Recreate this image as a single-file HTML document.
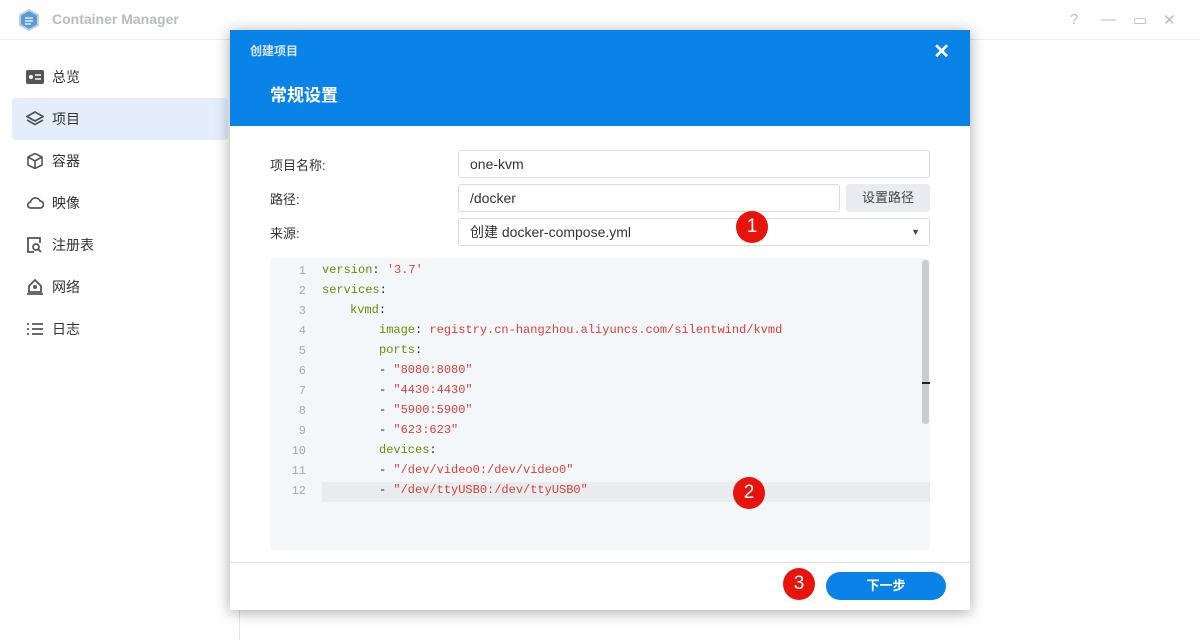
<!DOCTYPE html>
<html><head><meta charset="utf-8"><style>
*{box-sizing:border-box;margin:0;padding:0}
body{width:1200px;height:640px;overflow:hidden;background:#fff;font-family:"Liberation Sans","Noto Sans CJK SC",sans-serif;position:relative;color:#333}
.top{position:absolute;left:0;top:0;width:1200px;height:40px;border-bottom:1px solid #eee}
.title{position:absolute;left:52px;top:11px;font-size:14px;font-weight:bold;color:#b8bcc2}
.side{position:absolute;left:0;top:40px;width:240px;height:600px;border-right:1px solid #e6e6e6}
.item{position:absolute;left:12px;width:216px;height:42px;font-size:14px;color:#333;line-height:42px;padding-left:40px;border-radius:4px}
.item.act{background:#e3eefa}
.ic{position:absolute;left:14px;top:13px;width:18px;height:16px}
.ctl{position:absolute;top:11px;color:#b8bcc2;font-size:15px}
.dlg{position:absolute;left:230px;top:30px;width:740px;height:580px;background:#fff;box-shadow:0 2px 14px rgba(0,0,0,.35)}
.hd{height:96px;background:#0a83e8;color:#fff;position:relative}
.hd .s{position:absolute;left:20px;top:12px;font-size:12px;font-weight:bold;color:#d6e9fb}
.hd .b{position:absolute;left:40px;top:54px;font-size:17px;font-weight:bold}
.hd .x{position:absolute;right:20px;top:9px;font-size:20px;font-weight:bold}
.lbl{position:absolute;left:40px;font-size:13px;color:#333}
.inp{position:absolute;left:228px;height:28px;border:1px solid #d8dde3;border-radius:3px;font-size:14px;padding-left:11px;line-height:26px;color:#333}
.btn{position:absolute;left:616px;top:154px;width:84px;height:28px;background:#e8ebf0;border-radius:3px;font-size:13px;text-align:center;line-height:28px;color:#444}
.code{position:absolute;left:40px;top:228px;width:660px;height:292px;background:#f4f7fa;border-radius:3px;font-family:"Liberation Mono",monospace;font-size:12px}
.ln{position:absolute;left:0;width:36px;text-align:right;color:#aaa;font-size:12px}
.tx{position:absolute;white-space:pre;color:#222}
.k{color:#6b8c00}.v{color:#d9403a}
.foot{position:absolute;left:0;top:532px;width:740px;border-top:1px solid #e2e2e2;height:48px}
.nx{position:absolute;left:596px;top:542px;width:120px;height:28px;background:#0a83e8;border-radius:14px;color:#fff;font-size:13px;text-align:center;line-height:28px;font-weight:bold}
.bad{position:absolute;width:32px;height:32px;border-radius:50%;background:#e8140c;color:#fff;font-size:19px;text-align:center;line-height:32px}
</style></head><body>
<div class="top">
<svg style="position:absolute;left:18px;top:9px" width="22" height="22"><polygon points="11,1 20,6 20,16 11,21 2,16 2,6" fill="#5e9ad0" stroke="#b5d3ee" stroke-width="2"/><path d="M7 12h8M7 9h8M7 15h6" stroke="#dbe9f7" stroke-width="1.5"/></svg>
<div class="title">Container Manager</div>
<div class="ctl" style="left:1070px">?</div><div class="ctl" style="left:1101px">—</div><div class="ctl" style="left:1133px">▭</div><div class="ctl" style="left:1163px">✕</div>
</div>
<div class="side">
<div class="item" style="top:16px"><svg class="ic" viewBox="0 0 18 16"><rect x="0" y="1" width="18" height="14" rx="2" fill="#555"/><circle cx="5" cy="8" r="2" fill="#fff"/><path d="M9 6h6M9 10h6" stroke="#fff" stroke-width="1.6"/></svg>总览</div>
<div class="item act" style="top:58px"><svg class="ic" viewBox="0 0 18 16"><path d="M9 1L17 5.5 9 10 1 5.5z M1 9l8 4.5 8-4.5" fill="none" stroke="#555" stroke-width="1.8"/></svg>项目</div>
<div class="item" style="top:100px"><svg class="ic" viewBox="0 0 18 16"><path d="M9 0.5L16 4v8l-7 3.5L2 12V4z M2 4l7 4 7-4 M9 8v7.5" fill="none" stroke="#555" stroke-width="1.6"/></svg>容器</div>
<div class="item" style="top:142px"><svg class="ic" viewBox="0 0 18 16"><path d="M5 13h9a3.5 3.5 0 0 0 0-7 5 5 0 0 0-9.5 1A3 3 0 0 0 5 13z" fill="none" stroke="#555" stroke-width="1.7"/></svg>映像</div>
<div class="item" style="top:184px"><svg class="ic" viewBox="0 0 18 16"><path d="M8 15H2V1h12v5" fill="none" stroke="#555" stroke-width="1.8"/><circle cx="10" cy="10" r="3" fill="none" stroke="#555" stroke-width="1.7"/><path d="M12 12l3 3" stroke="#555" stroke-width="1.8"/></svg>注册表</div>
<div class="item" style="top:226px"><svg class="ic" viewBox="0 0 18 16"><path d="M3 7L9 1l6 6v6H3z M1 15h16" fill="none" stroke="#555" stroke-width="1.8"/><circle cx="9" cy="8" r="2" fill="#555"/></svg>网络</div>
<div class="item" style="top:268px"><svg class="ic" viewBox="0 0 18 16"><path d="M1 3h2M1 8h2M1 13h2M6 3h11M6 8h11M6 13h11" stroke="#555" stroke-width="1.8"/></svg>日志</div>
</div>
<div class="dlg">
<div class="hd"><div class="s">创建项目</div><div class="b" style="top:51px">常规设置</div><div class="x">✕</div></div>
<div class="lbl" style="top:125px">项目名称:</div>
<div class="inp" style="top:120px;width:472px">one-kvm</div>
<div class="lbl" style="top:159px">路径:</div>
<div class="inp" style="top:154px;width:382px">/docker</div>
<div class="btn">设置路径</div>
<div class="lbl" style="top:193px">来源:</div>
<div class="inp" style="top:188px;width:472px">创建 docker-compose.yml<span style="position:absolute;right:9px;top:0;font-size:9px;color:#444">▼</span></div>
<div class="code">
<div style="position:absolute;left:52px;top:224px;width:608px;height:20px;background:#e8ecef"></div>
<div style="position:absolute;left:652px;top:2px;width:7px;height:164px;background:#c9cdd1;border-radius:3px"></div>
<div style="position:absolute;left:652px;top:124px;width:8px;height:2px;background:#222"></div>
<div class="ln" style="top:6px">1</div><div class="tx" style="top:5px;left:52px"><span class="k">version</span>: <span class="v">'3.7'</span></div>
<div class="ln" style="top:26px">2</div><div class="tx" style="top:25px;left:52px"><span class="k">services</span>:</div>
<div class="ln" style="top:46px">3</div><div class="tx" style="top:45px;left:80px"><span class="k">kvmd</span>:</div>
<div class="ln" style="top:66px">4</div><div class="tx" style="top:65px;left:109px"><span class="k">image</span>: <span class="v">registry.cn-hangzhou.aliyuncs.com/silentwind/kvmd</span></div>
<div class="ln" style="top:86px">5</div><div class="tx" style="top:85px;left:109px"><span class="k">ports</span>:</div>
<div class="ln" style="top:106px">6</div><div class="tx" style="top:105px;left:109px">- <span class="v">"8080:8080"</span></div>
<div class="ln" style="top:126px">7</div><div class="tx" style="top:125px;left:109px">- <span class="v">"4430:4430"</span></div>
<div class="ln" style="top:146px">8</div><div class="tx" style="top:145px;left:109px">- <span class="v">"5900:5900"</span></div>
<div class="ln" style="top:166px">9</div><div class="tx" style="top:165px;left:109px">- <span class="v">"623:623"</span></div>
<div class="ln" style="top:186px">10</div><div class="tx" style="top:185px;left:109px"><span class="k">devices</span>:</div>
<div class="ln" style="top:206px">11</div><div class="tx" style="top:205px;left:109px">- <span class="v">"/dev/video0:/dev/video0"</span></div>
<div class="ln" style="top:226px">12</div><div class="tx" style="top:225px;left:109px">- <span class="v">"/dev/ttyUSB0:/dev/ttyUSB0"</span></div>
</div>
<div class="foot"></div>
<div class="nx">下一步</div>
<div class="bad" style="left:506px;top:181px">1</div>
<div class="bad" style="left:503px;top:447px">2</div>
<div class="bad" style="left:553px;top:538px">3</div>
</div>
</body></html>
